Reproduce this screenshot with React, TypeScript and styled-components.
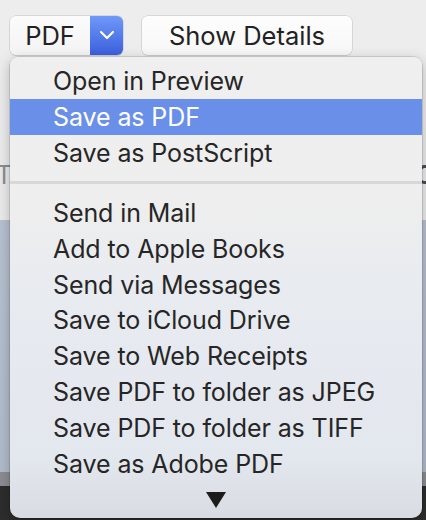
import React from "react";
import styled, { createGlobalStyle } from "styled-components";

const Global = createGlobalStyle`
  html, body { margin: 0; padding: 0; }
  body {
    width: 426px;
    height: 520px;
    overflow: hidden;
    background: #ececec;
    font-family: Inter, "Liberation Sans", sans-serif;
  }
`;

const Page = styled.div`
  position: relative;
  width: 426px;
  height: 520px;
  overflow: hidden;
  display: flex;
  flex-direction: column;
  background: linear-gradient(#ededed, #e9e9e9);
`;

const Toolbar = styled.div`
  display: flex;
  align-items: center;
  gap: 19px;
  padding: 15px 0 0 10px;
  height: 40px;
`;

const Popup = styled.div`
  display: flex;
  height: 39px;
  width: 113px;
  border-radius: 6px;
  overflow: hidden;
  box-shadow: 0 0 0 0.5px #c2c2c2, 0 1px 1px rgba(0, 0, 0, 0.12);
`;

const PopupLabel = styled.div`
  flex: 1;
  display: flex;
  align-items: center;
  justify-content: center;
  background: linear-gradient(#fbfbfb, #f4f4f4);
  font-size: 25.5px;
  color: #222;
`;

const PopupArrow = styled.div`
  width: 33px;
  display: flex;
  align-items: center;
  justify-content: center;
  background: linear-gradient(#6e99f9, #3b5fdd);
`;

const Button = styled.div`
  width: 210px;
  height: 39px;
  border-radius: 6px;
  display: flex;
  align-items: center;
  justify-content: center;
  background: linear-gradient(#fdfdfd, #f7f7f7);
  box-shadow: 0 0 0 0.5px #c2c2c2, 0 1px 1px rgba(0, 0, 0, 0.12);
  font-size: 25.5px;
  color: #222;
`;

const Content = styled.div`
  flex: 1;
  display: flex;
  flex-direction: column;
  padding-top: 108px;
`;

const TextRow = styled.div`
  display: flex;
  justify-content: space-between;
  margin: 0 -8px 0 -4px;
  height: 57px;
  font-size: 25px;
  line-height: 24px;
  color: #8a8e95;
`;

const DarkGlyph = styled.span`
  color: #4a4d52;
  font-weight: 600;
`;

const BluePanel = styled.div`
  height: 252px;
  background: linear-gradient(#b8c1d0, #b2bbca);
`;

const GrayBar = styled.div`
  height: 14px;
  background: #8b8d92;
`;

const DarkArea = styled.div`
  flex: 1;
  background: #2d2d2d;
`;

const Menu = styled.div`
  position: absolute;
  left: 10px;
  top: 57px;
  width: 412px;
  height: 461px;
  border-radius: 8px 8px 10px 10px;
  padding-top: 6px;
  box-sizing: border-box;
  background: linear-gradient(
    #efefef 0px,
    #eeeeee 150px,
    #e8ebf0 230px,
    #e3e7ee 400px,
    #d9dce2 461px
  );
  box-shadow: 0 0 0 0.5px rgba(0, 0, 0, 0.22), 0 4px 14px rgba(0, 0, 0, 0.25);
  display: flex;
  flex-direction: column;
  overflow: hidden;
`;

const Item = styled.div<{ $active?: boolean }>`
  height: 36px;
  display: flex;
  align-items: center;
  padding-left: 43px;
  font-size: 25px;
  letter-spacing: -0.1px;
  color: ${(p) => (p.$active ? "#ffffff" : "#262626")};
  background: ${(p) => (p.$active ? "#6a8fe9" : "transparent")};
`;

const Separator = styled.div`
  height: 24px;
  display: flex;
  align-items: center;
  &::after {
    content: "";
    flex: 1;
    height: 3px;
    background: #d8d8d8;
  }
`;

const More = styled.div`
  height: 36px;
  display: flex;
  align-items: center;
  justify-content: center;
`;

const before = ["Open in Preview", "Save as PDF", "Save as PostScript"];
const after = [
  "Send in Mail",
  "Add to Apple Books",
  "Send via Messages",
  "Save to iCloud Drive",
  "Save to Web Receipts",
  "Save PDF to folder as JPEG",
  "Save PDF to folder as TIFF",
  "Save as Adobe PDF",
];

export default function App() {
  return (
    <Page>
      <Global />
      <Toolbar>
        <Popup>
          <PopupLabel>PDF</PopupLabel>
          <PopupArrow>
            <svg width="16" height="10" viewBox="0 0 16 10">
              <path
                d="M2 2 L8 8 L14 2"
                fill="none"
                stroke="#fff"
                strokeWidth="2.2"
                strokeLinecap="round"
                strokeLinejoin="round"
              />
            </svg>
          </PopupArrow>
        </Popup>
        <Button>Show Details</Button>
      </Toolbar>
      <Content>
        <TextRow>
          <span>T</span>
          <DarkGlyph>C</DarkGlyph>
        </TextRow>
        <BluePanel />
        <GrayBar />
        <DarkArea />
      </Content>
      <Menu>
        {before.map((t) => (
          <Item key={t} $active={t === "Save as PDF"}>
            {t}
          </Item>
        ))}
        <Separator />
        {after.map((t) => (
          <Item key={t}>{t}</Item>
        ))}
        <More>
          <svg width="20" height="16" viewBox="0 0 20 16">
            <path d="M0 0 H20 L10 16 Z" fill="#1c1c1c" />
          </svg>
        </More>
      </Menu>
    </Page>
  );
}
